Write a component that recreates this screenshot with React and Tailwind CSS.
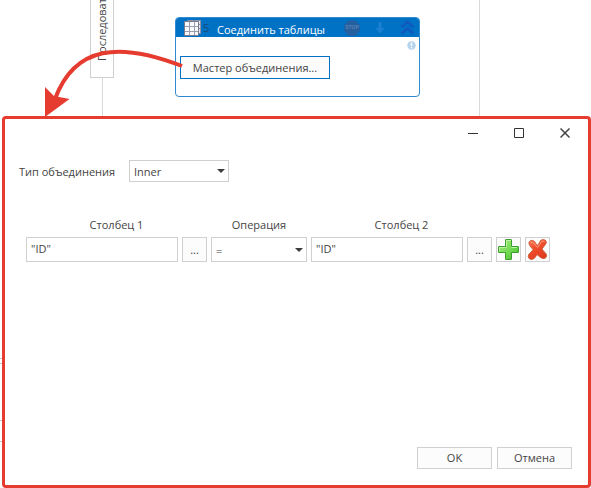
import React from "react";

const fieldBorder = "border border-[#d0d0d0]";
const buttonStyle = "flex items-center justify-center border border-[#d0d0d0] bg-[#fcfcfc]";

function Dropdown({ id, label, options, className }) {
  return (
    <div className={`relative ${className}`}>
      <select
        id={id}
        aria-label={label}
        className={`block h-full w-full appearance-none bg-white pl-1 pr-4 pt-0.5 text-[#444444] outline-none ${fieldBorder}`}
      >
        {options.map((option) => (
          <option key={option}>{option}</option>
        ))}
      </select>
      <svg className="pointer-events-none absolute inset-y-0 right-1 my-auto h-1 w-2" viewBox="0 0 8 4" aria-hidden="true">
        <path d="M0 0H8L4 4Z" fill="#3c3c3c" />
      </svg>
    </div>
  );
}

function TablesIcon() {
  return (
    <svg className="h-[18px] w-[18px] shrink-0" viewBox="0 0 18 18" aria-hidden="true">
      <path d="M3.500 1.500h13v13h-13z" fill="#e4e5f3" stroke="#8d92a8" />
      <path d="M14 5.500h3M14 9.500h3" stroke="#8d92a8" />
      <path d="M.5 2.500h14v14H.5z" fill="#fafafe" stroke="#777b8c" />
      <path d="M1 7.500h13M1 12.500h13M5.500 3v13M10.500 3v13" stroke="#9a9dac" />
    </svg>
  );
}

function StopIcon() {
  return (
    <svg className="h-4 w-4" viewBox="0 0 16 16" aria-hidden="true">
      <path d="M5 .5h6L15.500 5v6L11 15.500H5L.5 11V5z" fill="#245f9f" stroke="#1b63a8" />
      <text x="8" y="9" textAnchor="middle" fontSize="5" fontWeight="700" fontFamily="Liberation Sans, sans-serif" fill="#5a83b5">STOP</text>
    </svg>
  );
}

function DownIcon() {
  return (
    <svg className="h-3 w-3" viewBox="0 0 12 12" aria-hidden="true">
      <path d="M4.500 0h3v6h3L6 11.500L1.500 6h3z" fill="#1c80d2" />
    </svg>
  );
}

function CollapseIcon() {
  return (
    <svg className="h-[15px] w-[15px]" viewBox="0 0 15 15" aria-hidden="true">
      <path d="M1.500 7L7.500 1.500L13.500 7M1.500 13.500L7.500 8L13.500 13.500" fill="none" stroke="#0a54bd" strokeWidth="2.500" />
      <path d="M2 6L7.500 1L13 6M2 12.500L7.500 7.500L13 12.500" fill="none" stroke="#2a72c8" strokeWidth=".6" />
    </svg>
  );
}

function InfoIcon() {
  return (
    <svg className="h-[9px] w-[9px]" viewBox="0 0 9 9" aria-hidden="true">
      <circle cx="4.500" cy="4.500" r="4.200" fill="#b3d3ee" />
      <path d="M4.500 1.500v3.500M4.500 6v1.500" stroke="#fff" strokeWidth="1.500" />
    </svg>
  );
}

function PlusIcon() {
  return (
    <svg className="h-[23px] w-[23px] shrink-0" viewBox="0 0 23 23" aria-hidden="true">
      <defs>
        <linearGradient id="plusFill" x1="0" y1="0" x2="1" y2="1">
          <stop offset="0" stopColor="#a4ee78" />
          <stop offset="0.500" stopColor="#78dc58" />
          <stop offset="1" stopColor="#3fbb24" />
        </linearGradient>
      </defs>
      <path d="M9 1.500h5q.5 0 .5.5v6.500H21q.5 0 .5.5v5q0 .5-.5.5h-6.500V21q0 .5-.5.5H9q-.5 0-.5-.5v-6.500H2q-.5 0-.5-.5V9q0-.5.5-.5h6.500V2q0-.5.500-.5z" fill="url(#plusFill)" stroke="#3c9c2e" strokeWidth="1" />
      <path d="M9.500 8V2.500H14M2.500 13V9.500h7M14.500 9.500H20" fill="none" stroke="#bdf3a2" strokeWidth="1" />
    </svg>
  );
}

function CrossIcon() {
  return (
    <svg className="h-[23px] w-[23px] shrink-0" viewBox="0 0 23 23" aria-hidden="true">
      <defs>
        <linearGradient id="crossFill" x1="0" y1="0" x2="0.600" y2="1">
          <stop offset="0" stopColor="#fb8a68" />
          <stop offset="0.400" stopColor="#f2512f" />
          <stop offset="1" stopColor="#e03a1c" />
        </linearGradient>
      </defs>
      <path d="M4 3Q6.500 1.500 8.500 3.500Q10 6 11.500 7.500Q13.500 5 14.500 2.500Q16.500 1 19 2Q21 3 20 5.500Q18 8.500 16 11Q18 14 20 15.500Q21.500 18 19.500 20Q17 21.500 14.500 19.500L11 16.500Q9.500 19.500 7.500 21Q5 22 3 20.500Q1.500 18.500 3 16Q5.500 14 7 11.500Q5 9.500 3.500 7Q2 4.500 4 3Z" fill="url(#crossFill)" stroke="#d0603f" strokeWidth="1" />
      <path d="M5 4.500q1.500-.5 2.500.5l4 4.500q2.500-3 4-6 1.500-.8 3 0" fill="none" stroke="#ff9f80" strokeWidth="1" />
    </svg>
  );
}

function JoinNode() {
  return (
    <article className="absolute left-[175px] top-[17px] h-20 w-[245px] overflow-hidden rounded-[4px] border border-[#2f8bd0] bg-white">
      <header className="flex h-[19px] items-center bg-[#0072c6] pl-2 pr-1">
        <TablesIcon />
        <span className="w-[15px] pl-px text-[#174a78]">5</span>
        <h2 className="grow pt-1 font-medium text-white">Соединить таблицы</h2>
        <div className="flex items-center gap-[14px]">
          <StopIcon />
          <DownIcon />
          <CollapseIcon />
        </div>
      </header>
      <div className="flex h-[19px] justify-end px-[3px] pt-1">
        <InfoIcon />
      </div>
      <button type="button" className="ml-1 flex h-[23px] w-[150px] items-center justify-center border border-[#0072c6] bg-[#fcfcfc]">
        Мастер объединения...
      </button>
    </article>
  );
}

function Canvas() {
  return (
    <section className="relative h-[116px] shrink-0">
      <div className="absolute left-[102px] top-0 h-full w-[378px] border-x border-[#d9d9d9]" />
      <div className="absolute left-[90px] top-0 flex h-[78px] w-6 rotate-180 items-center border-l border-r border-t border-[#d0d0d0] bg-white pt-4 [writing-mode:vertical-rl]">
        <span className="whitespace-nowrap leading-[22px]">Последоват</span>
      </div>
      <JoinNode />
      <svg className="absolute left-0 top-0 h-[116px] w-[200px]" viewBox="0 0 200 116" aria-hidden="true">
        <path d="M182 66C120 42 75 45 55 99" fill="none" stroke="#e63c30" strokeWidth="4" />
        <path d="M45 87L54 96L69.500 99L45 117Z" fill="#e63c30" />
      </svg>
    </section>
  );
}

function WindowControls() {
  const control = "flex h-7 w-[46px] items-center justify-center";
  return (
    <div className="flex justify-end">
      <button type="button" aria-label="Свернуть" className={control}>
        <svg className="h-[11px] w-[11px]" viewBox="0 0 11 11"><path d="M0 5.500h10" stroke="#333" /></svg>
      </button>
      <button type="button" aria-label="Развернуть" className={control}>
        <svg className="h-[11px] w-[11px]" viewBox="0 0 11 11"><path d="M.5 .5h9v9h-9z" fill="none" stroke="#333" /></svg>
      </button>
      <button type="button" aria-label="Закрыть" className={control}>
        <svg className="h-[11px] w-[11px]" viewBox="0 0 11 11"><path d="M.5 .5l9 9M9.500 .5l-9 9" stroke="#444" strokeWidth="1.500" /></svg>
      </button>
    </div>
  );
}

function JoinDialog() {
  const input = `h-[25px] w-full min-w-0 bg-white px-1 pb-0.5 text-[#444444] outline-none ${fieldBorder}`;
  return (
    <form className="flex grow flex-col rounded-[4px] border-3 border-[#e63c30] bg-white" onSubmit={(e) => e.preventDefault()}>
      <WindowControls />
      <div className="mt-[13px] flex items-center pl-[14px]">
        <label htmlFor="joinType" className="w-[110px] pt-0.5">Тип объединения</label>
        <Dropdown id="joinType" options={["Inner", "Left", "Full"]} className="h-[22px] w-[100px]" />
      </div>
      <div className="mt-[35px] grid grid-cols-[minmax(0,1fr)_25px_96px_minmax(0,1fr)_25px_25px_25px] gap-x-1 gap-y-1 pl-[21px] pr-[38px]">
        <label htmlFor="column1" className="col-span-2 text-center">Столбец 1</label>
        <label htmlFor="operation" className="text-center">Операция</label>
        <label htmlFor="column2" className="col-span-2 text-center">Столбец 2</label>
        <span className="col-span-2" />
        <input id="column1" defaultValue={'"ID"'} className={input} />
        <button type="button" className={buttonStyle}>...</button>
        <Dropdown id="operation" options={["=", "≠", "<", ">"]} className="h-[25px]" />
        <input id="column2" defaultValue={'"ID"'} className={input} />
        <button type="button" className={buttonStyle}>...</button>
        <button type="button" aria-label="Добавить" className={buttonStyle}><PlusIcon /></button>
        <button type="button" aria-label="Удалить" className={buttonStyle}><CrossIcon /></button>
      </div>
      <div className="mt-auto flex justify-end gap-[5px] p-4">
        <button type="submit" className={`h-[22px] w-[75px] ${buttonStyle}`}>OK</button>
        <button type="button" className={`h-[22px] w-[75px] ${buttonStyle}`}>Отмена</button>
      </div>
    </form>
  );
}

export default function App() {
  return (
    <main className="flex min-h-screen flex-col bg-white font-['Open_Sans','Noto_Sans',sans-serif] text-[11px] leading-4 text-[#444444]">
      <Canvas />
      <div className="flex grow">
        <div className="w-0.5 shrink-0 pt-[242px]">
          <div className="h-[6px] border-y border-[#c8c8c8]" />
          <div className="mt-14 h-[22px] border-y border-[#c8c8c8]" />
        </div>
        <JoinDialog />
      </div>
    </main>
  );
}
